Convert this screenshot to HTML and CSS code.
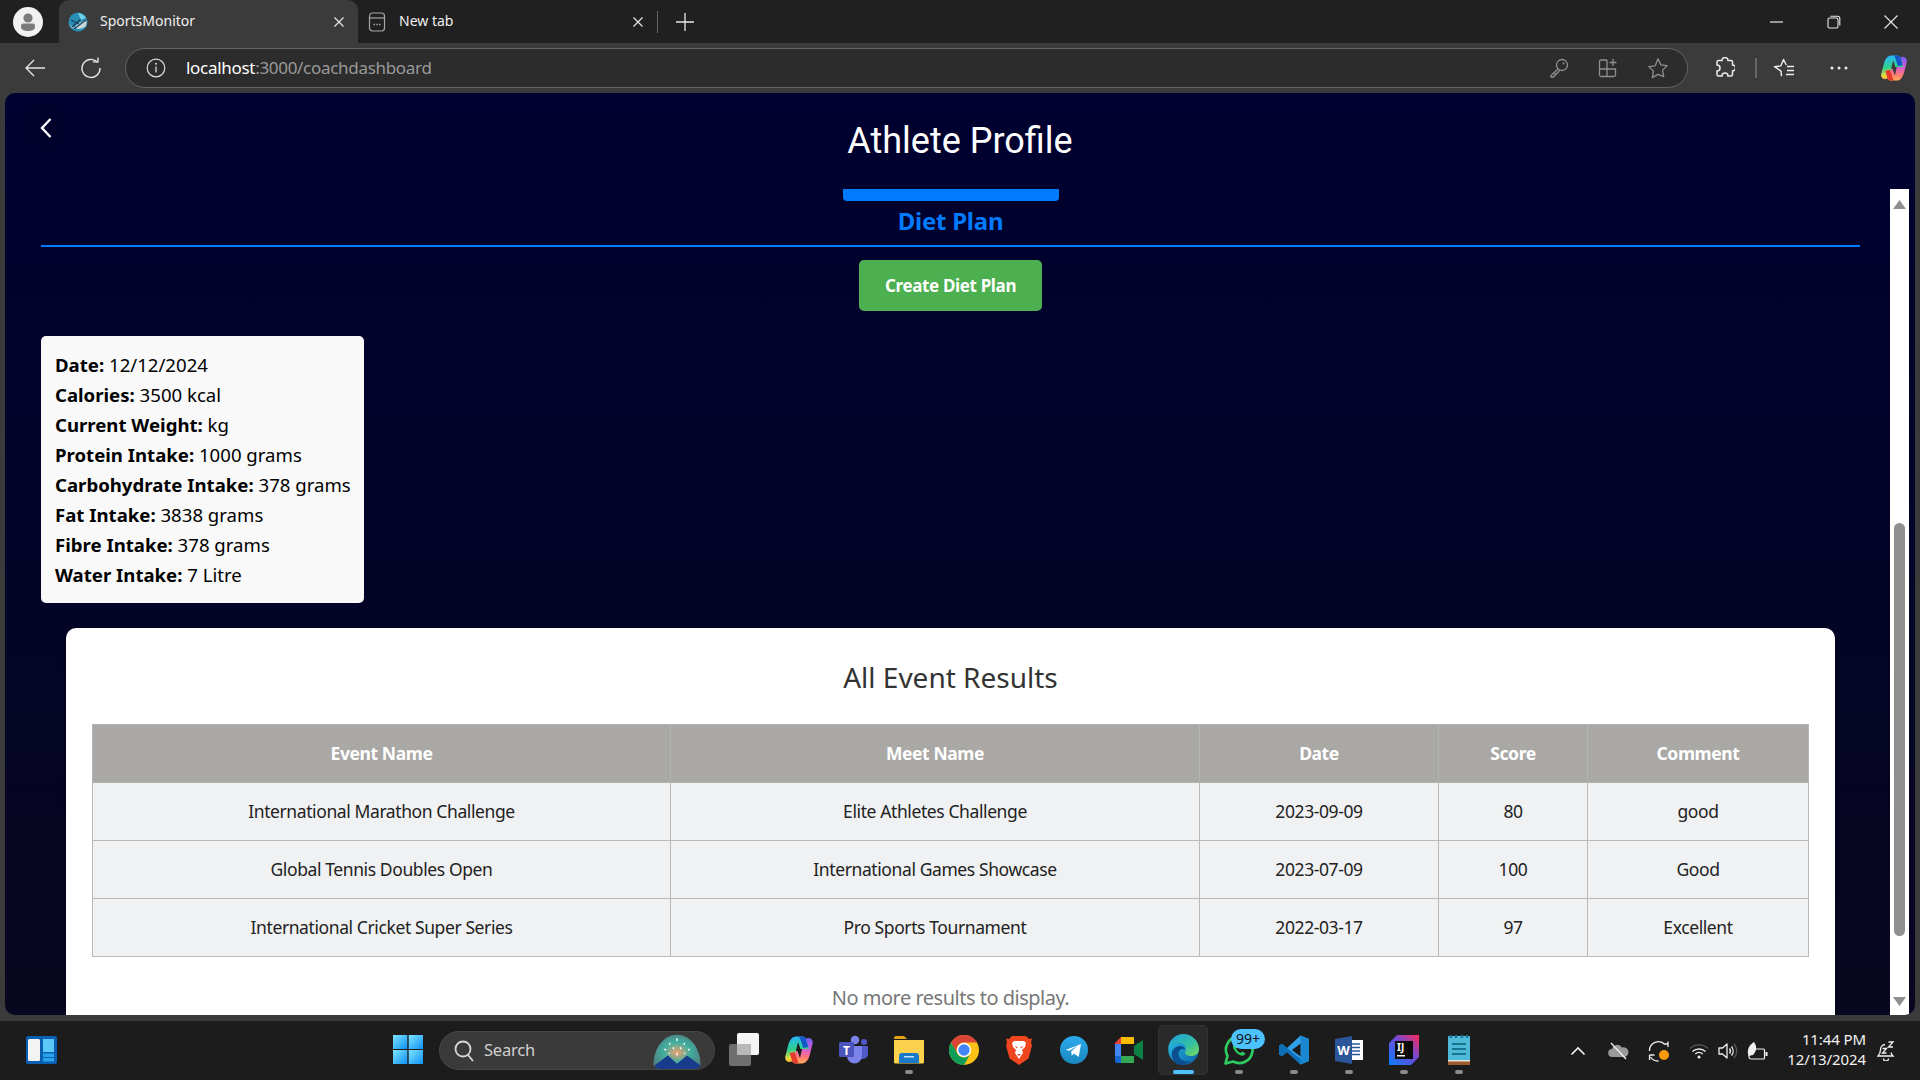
FILE: index.html
```html
<!DOCTYPE html>
<html lang="en">
<head>
<meta charset="utf-8">
<title>SportsMonitor</title>
<link rel="stylesheet" href="styles.css">
</head>
<body>
<div class="screen">
  <div class="tabstrip">
    <div class="profile">
      <svg width="30" height="30" viewBox="0 0 30 30"><circle cx="15" cy="15" r="15" fill="#f1f1f1"/><circle cx="15" cy="11" r="4.6" fill="#7b7b7b"/><path d="M8 18.5a2 2 0 0 1 2-2h10a2 2 0 0 1 2 2v1.5c0 2.6-3.2 4-7 4s-7-1.400-7-4z" fill="#7b7b7b"/></svg>
    </div>
    <div class="tab tab-active">
      <svg class="tab-ico" width="20" height="20" viewBox="0 0 20 20"><circle cx="10" cy="10" r="9.500" fill="#2a8fb5"/><path d="M1 12c4 5 11 7 17 2 .6-2 1-4 0-6-4 2-9 3-12 9-2-1-4-3-5-5z" fill="#c9d6dc"/><path d="M4 15 16 4M6 17 18 8M3 8l8 4" stroke="#1d3d55" stroke-width="1.100" fill="none"/><path d="M10 1c3 0 6 2 8 5l-5 2z" fill="#6fd0ea"/></svg>
      <span class="tab-title">SportsMonitor</span>
      <svg class="tab-x" width="12" height="12" viewBox="0 0 12 12"><path d="M1.500 1.500l9 9M10.500 1.500l-9 9" stroke="#e8e8e8" stroke-width="1.200"/></svg>
    </div>
    <div class="tab tab-idle">
      <svg class="tab-ico" width="20" height="22" viewBox="0 0 20 22"><rect x="2.500" y="2" width="15" height="18" rx="3" fill="none" stroke="#a8a8a8" stroke-width="1.200"/><path d="M2.500 7h15" stroke="#a8a8a8" stroke-width="1.200"/><path d="M6.500 13.500h1.500M9.300 13.500h1.500M12 13.500h1.500" stroke="#a8a8a8" stroke-width="1.500"/></svg>
      <span class="tab-title">New tab</span>
      <svg class="tab-x" width="12" height="12" viewBox="0 0 12 12"><path d="M1.500 1.500l9 9M10.500 1.500l-9 9" stroke="#e8e8e8" stroke-width="1.200"/></svg>
    </div>
    <div class="tab-sep"></div>
    <svg class="tab-plus" width="18" height="18" viewBox="0 0 18 18"><path d="M9 0v18M0 9h18" stroke="#e8e8e8" stroke-width="1.300"/></svg>
    <div class="win-controls">
      <svg width="14" height="14" viewBox="0 0 14 14"><path d="M0 7h13" stroke="#e8e8e8" stroke-width="1.200"/></svg>
      <svg width="14" height="14" viewBox="0 0 14 14"><rect x="1" y="3" width="10" height="10" rx="1.500" fill="none" stroke="#e8e8e8" stroke-width="1.100"/><path d="M3.500 1.200h7.300a2 2 0 0 1 2 2v7.300" fill="none" stroke="#e8e8e8" stroke-width="1.100"/></svg>
      <svg width="14" height="14" viewBox="0 0 14 14"><path d="M.5.500l13 13M13.500.500l-13 13" stroke="#e8e8e8" stroke-width="1.100"/></svg>
    </div>
  </div>

  <div class="toolbar">
    <svg class="tool-back" width="22" height="20" viewBox="0 0 22 20"><path d="M21 10H2M10 2l-8 8 8 8" fill="none" stroke="#e4e4e4" stroke-width="1.400"/></svg>
    <svg class="tool-reload" width="22" height="22" viewBox="0 0 22 22"><path d="M17.500 5.200A9 9 0 1 0 20 11" fill="none" stroke="#e4e4e4" stroke-width="1.400"/><path d="M12.800 4.900h5.200V.500" fill="none" stroke="#e4e4e4" stroke-width="1.400"/></svg>
    <div class="urlbar">
      <svg class="url-info" width="20" height="20" viewBox="0 0 20 20"><circle cx="10" cy="10" r="8.800" fill="none" stroke="#dcdcdc" stroke-width="1.200"/><path d="M10 8.500v6" stroke="#dcdcdc" stroke-width="1.300"/><circle cx="10" cy="5.800" r="1" fill="#dcdcdc"/></svg>
      <span class="url-text"><span class="url-host">localhost</span>:3000/coachdashboard</span>
      <div class="url-icons">
        <svg width="20" height="20" viewBox="0 0 20 20"><circle cx="13" cy="7" r="5.500" fill="none" stroke="#8f8f8f" stroke-width="1.300"/><circle cx="14.500" cy="5.500" r="1" fill="#8f8f8f"/><path d="M9 11 2 17.500v1.500h2.500L6 17.500V16h1.500l3-3.500" fill="none" stroke="#8f8f8f" stroke-width="1.300"/></svg>
        <svg width="20" height="20" viewBox="0 0 20 20"><path d="M9 2H3a1.500 1.500 0 0 0-1.500 1.500V17A1.500 1.500 0 0 0 3 18.500h13a1.500 1.500 0 0 0 1.500-1.500V11H1.500M9 2v16.500" fill="none" stroke="#8f8f8f" stroke-width="1.300"/><path d="M15 1v7M11.500 4.500h7" stroke="#8f8f8f" stroke-width="1.300"/></svg>
        <svg width="22" height="22" viewBox="0 0 22 22"><path d="M11 1.800l2.800 6 6.400.8-4.700 4.500 1.200 6.500L11 17.400l-5.700 3.200 1.200-6.500L1.800 9.600l6.400-.8z" fill="none" stroke="#8f8f8f" stroke-width="1.300" stroke-linejoin="round"/></svg>
      </div>
    </div>
    <svg class="tool-ext" width="20" height="22" viewBox="0 0 20 22"><path d="M7 3.500a3 3 0 0 1 6 0h3.500a1.500 1.500 0 0 1 1 1.500v3a3 3 0 0 1 0 6v3.500a1.500 1.500 0 0 1-1.500 1.500h-3a3 3 0 0 0-6 0H3.500A1.500 1.500 0 0 1 2 17.500V14a3 3 0 0 0 0-6V5a1.500 1.500 0 0 1 1.500-1.500z" fill="none" stroke="#ececec" stroke-width="1.500"/></svg>
    <div class="tool-sep"></div>
    <svg class="tool-fav" width="22" height="22" viewBox="0 0 22 22"><path d="M8.500 19.300 8 14.100 1.500 9.700l6.300-.8L10.500 2.500l2.800 5.500M14 9.500h7M14 13.500h7M13 17.500h8" fill="none" stroke="#ececec" stroke-width="1.400" stroke-linejoin="round"/></svg>
    <svg class="tool-more" width="18" height="6" viewBox="0 0 18 6"><circle cx="2" cy="3" r="1.500" fill="#ececec"/><circle cx="9" cy="3" r="1.500" fill="#ececec"/><circle cx="16" cy="3" r="1.500" fill="#ececec"/></svg>
    <svg class="tool-copilot" width="28" height="28" viewBox="0 0 30 30"><defs><linearGradient id="cpa" x1=".3" y1="0" x2=".4" y2="1"><stop offset="0" stop-color="#27b7ff"/><stop offset=".5" stop-color="#2fd08c"/><stop offset=".85" stop-color="#f5d93a"/><stop offset="1" stop-color="#f5a03a"/></linearGradient><linearGradient id="cpb" x1=".6" y1="0" x2=".5" y2="1"><stop offset="0" stop-color="#7a5cf0"/><stop offset=".45" stop-color="#d95cd0"/><stop offset=".75" stop-color="#ff7a70"/><stop offset="1" stop-color="#ffb060"/></linearGradient></defs><path d="M18 28.500h-6.500c-1.800 0-3-1.200-3.400-2.500L5 16h8.500l2.500 7 3.500-15.500c.5-2.500 2.500-4.500 5-4.500 3 0 4.700 2.500 4.200 5.500L26 19c-1.300 5.500-4 9.500-8 9.500z" fill="url(#cpb)"/><path d="M12 1.500h6.500c1.800 0 3 1.200 3.400 2.500L25 14h-8.500L14 7l-3.500 15.500c-.5 2.500-2.500 4.500-5 4.500-3 0-4.700-2.500-4.200-5.500L4 11c1.300-5.500 4-9.500 8-9.500z" fill="url(#cpa)"/><path d="M15 1.500h3.500c1.800 0 3 1.200 3.400 2.500l2.400 8-5 1-3-9z" fill="#1557c8"/><path d="M15 28.500h-3.500c-1.800 0-3-1.200-3.400-2.500l-2.400-8 5-1 3 9z" fill="#e63a2e"/></svg>
  </div>

  <main class="page">
    <button class="back" type="button" aria-label="Back">
      <svg width="14" height="22" viewBox="0 0 14 22"><path d="M11.500 2 3 11l8.500 9" fill="none" stroke="#fff" stroke-width="2.400"/></svg>
    </button>
    <h1 class="page-title">Athlete Profile</h1>
    <div class="scroll">
      <div class="content">
        <div class="tabs">
          <div class="tab-pill">
            <div class="tab-bar"></div>
            <div class="tab-name">Diet Plan</div>
          </div>
        </div>
        <div class="actions"><button class="create" type="button">Create Diet Plan</button></div>
        <div class="diet-card">
          <p><b>Date:</b> 12/12/2024</p>
          <p><b>Calories:</b> 3500 kcal</p>
          <p><b>Current Weight:</b> kg</p>
          <p><b>Protein Intake:</b> 1000 grams</p>
          <p><b>Carbohydrate Intake:</b> 378 grams</p>
          <p><b>Fat Intake:</b> 3838 grams</p>
          <p><b>Fibre Intake:</b> 378 grams</p>
          <p><b>Water Intake:</b> 7 Litre</p>
        </div>
        <section class="results">
          <h2>All Event Results</h2>
          <table>
            <colgroup><col class="c1"><col class="c2"><col class="c3"><col class="c4"><col class="c5"></colgroup>
            <thead><tr><th>Event Name</th><th>Meet Name</th><th>Date</th><th>Score</th><th>Comment</th></tr></thead>
            <tbody>
              <tr><td>International Marathon Challenge</td><td>Elite Athletes Challenge</td><td>2023-09-09</td><td>80</td><td>good</td></tr>
              <tr><td>Global Tennis Doubles Open</td><td>International Games Showcase</td><td>2023-07-09</td><td>100</td><td>Good</td></tr>
              <tr><td>International Cricket Super Series</td><td>Pro Sports Tournament</td><td>2022-03-17</td><td>97</td><td>Excellent</td></tr>
            </tbody>
          </table>
          <p class="no-more">No more results to display.</p>
        </section>
      </div>
      <div class="scrollbar">
        <svg class="sb-arrow" width="13" height="9" viewBox="0 0 13 9"><path d="M6.500 0 13 9H0z" fill="#8f8f8f"/></svg>
        <div class="sb-track"><div class="sb-thumb"></div></div>
        <svg class="sb-arrow" width="13" height="9" viewBox="0 0 13 9"><path d="M6.500 9 13 0H0z" fill="#8f8f8f"/></svg>
      </div>
    </div>
  </main>

  <footer class="taskbar">
    <svg class="widgets" width="31" height="28" viewBox="0 0 31 28"><rect width="31" height="28" rx="2" fill="#0b5fb0"/><rect x="2" y="3" width="12" height="22" rx="1.500" fill="#f3f3f3"/><rect x="17" y="3" width="11" height="13" fill="#5cc8f5"/><rect x="17" y="17.500" width="11" height="3.500" fill="#2aa5ec"/><rect x="17" y="22" width="11" height="3.500" fill="#2aa5ec"/></svg>
    <svg class="start" width="30" height="29" viewBox="0 0 30 29"><defs><linearGradient id="ws" x1="0" y1="0" x2="1" y2="1"><stop offset="0" stop-color="#7de6ff"/><stop offset="1" stop-color="#0f90f5"/></linearGradient></defs><rect width="14.300" height="14" fill="url(#ws)"/><rect x="15.700" width="14.300" height="14" fill="url(#ws)"/><rect y="15" width="14.300" height="14" fill="url(#ws)"/><rect x="15.700" y="15" width="14.300" height="14" fill="url(#ws)"/></svg>
    <div class="search">
      <svg width="22" height="24" viewBox="0 0 22 24"><circle cx="10" cy="10" r="7.500" fill="none" stroke="#d8d8d8" stroke-width="1.800"/><path d="M15 16l5 6" stroke="#d8d8d8" stroke-width="1.800"/></svg>
      <span class="search-label">Search</span>
      <svg class="search-art" width="56" height="40" viewBox="0 0 56 44"><defs><radialGradient id="sa" cx=".5" cy=".5" r=".7"><stop offset="0" stop-color="#f0a070"/><stop offset=".4" stop-color="#3fb0a0"/><stop offset="1" stop-color="#5a6470"/></radialGradient></defs><path d="M2 38C2 18 14 4 28 4s26 14 26 34l-6 5H8z" fill="url(#sa)"/><path d="M3 38 18 27l10 9 11-9 15 11-6 5H8z" fill="#173c8c"/><path d="M28 8v3M20 13v2M36 13v2M14 20l2 1M42 20l-2 1M24 18v2M32 18v2M28 24v3M19 24l1 1M37 24l-1 1" stroke="#fff" stroke-width="1.500"/></svg>
    </div>
    <svg class="taskview" width="30" height="33" viewBox="0 0 30 33"><rect x="0" y="11" width="22" height="22" rx="2" fill="#6e6e6e"/><rect x="8" y="0" width="22" height="22" rx="2" fill="#f4f4f4"/><rect x="8" y="11" width="14" height="11" fill="#b8b8b8"/></svg>
    <div class="apps">
      <div class="app"><svg width="30" height="30" viewBox="0 0 30 30"><path d="M18 28.500h-6.500c-1.800 0-3-1.200-3.400-2.500L5 16h8.500l2.500 7 3.500-15.500c.5-2.500 2.500-4.500 5-4.500 3 0 4.700 2.500 4.200 5.500L26 19c-1.300 5.500-4 9.500-8 9.500z" fill="url(#cpb)"/><path d="M12 1.500h6.500c1.800 0 3 1.200 3.400 2.500L25 14h-8.500L14 7l-3.500 15.500c-.5 2.500-2.500 4.500-5 4.500-3 0-4.700-2.500-4.200-5.500L4 11c1.300-5.500 4-9.500 8-9.500z" fill="url(#cpa)"/><path d="M15 1.500h3.500c1.800 0 3 1.200 3.400 2.500l2.400 8-5 1-3-9z" fill="#1557c8"/><path d="M15 28.500h-3.500c-1.800 0-3-1.200-3.400-2.500l-2.400-8 5-1 3 9z" fill="#e63a2e"/></svg></div>
      <div class="app"><svg width="30" height="30" viewBox="0 0 30 30"><circle cx="16" cy="5" r="4.300" fill="#7b83eb"/><circle cx="25" cy="7" r="3" fill="#5059c9"/><path d="M21 11h8v8a5 5 0 0 1-5 5h-3z" fill="#5059c9"/><path d="M8 11h15v10a7.500 7.500 0 0 1-15 0z" fill="#7b83eb"/><rect y="7" width="15" height="15" rx="1.500" fill="#4b53bc"/><text class="t-teams" x="7.500" y="19.500" text-anchor="middle">T</text></svg></div>
      <div class="app"><svg width="30" height="28" viewBox="0 0 30 28"><path d="M0 2a2 2 0 0 1 2-2h8l3 3h-13z" fill="#e4a218"/><path d="M0 4h30v22a1.500 1.500 0 0 1-1.500 1.500h-27A1.500 1.500 0 0 1 0 26z" fill="#fcd24c"/><path d="M5 27v-7a3 3 0 0 1 3-3h14a3 3 0 0 1 3 3v7z" fill="#1878c9"/><rect x="10" y="20" width="10" height="1.500" fill="#bfe6ff"/></svg><span class="run"></span></div>
      <div class="app"><svg width="30" height="30" viewBox="0 0 30 30"><circle cx="15" cy="15" r="15" fill="#fbc116"/><path d="M2 7.500A15 15 0 0 1 28 7.500H15a7.500 7.500 0 0 0-6.500 11.250z" fill="#db4437"/><path d="M2 7.500l6.500 11.250A7.500 7.500 0 0 0 21.500 18.750L15 30A15 15 0 0 1 2 7.500z" fill="#0f9d58"/><circle cx="15" cy="15" r="7.200" fill="#fff"/><circle cx="15" cy="15" r="5.700" fill="#4285f4"/></svg></div>
      <div class="app"><svg width="26" height="30" viewBox="0 0 26 30"><path d="M6 1h14l3 3 3-.5-1 4 1 3-3.500 13L13 30 3.500 23.500 0 10.500l1-3-1-4 3 .5z" fill="#f0461f"/><path d="M8 6h10l2 2-1 4-3 3 1 3-4 6-4-6 1-3-3-3-1-4z" fill="#fff"/><path d="M8.500 11l3 1-.5 1.500zM17.500 11l-3 1 .5 1.500zM11 19h4l-2 2z" fill="#f0461f"/></svg></div>
      <div class="app"><svg width="28" height="28" viewBox="0 0 28 28"><defs><linearGradient id="tg" x1="0" y1="0" x2="0" y2="1"><stop offset="0" stop-color="#2aabee"/><stop offset="1" stop-color="#1a87bd"/></linearGradient></defs><circle cx="14" cy="14" r="14" fill="url(#tg)"/><path d="M5.500 14 21 8l-2.300 13-4.700-3.500-2.300 2.300-.5-4.300 6.500-6-8.300 5.200z" fill="#fff"/></svg></div>
      <div class="app"><svg width="28" height="26" viewBox="0 0 28 26"><path d="M6 0h13v7H6z" fill="#fbbc04"/><path d="M0 6 6 0v7H0z" fill="#ea4335"/><path d="M0 7h6v12H0z" fill="#4285f4"/><path d="M0 19h6v7H2a2 2 0 0 1-2-2z" fill="#1967d2"/><path d="M6 19h13v7H6z" fill="#34a853"/><path d="M19 9l9-6v20l-9-6z" fill="#0d8043"/><path d="M19 7V2a2 2 0 0 0-2-2h-1v7z" fill="#fbbc04"/></svg></div>
      <div class="app app-active"><svg width="31" height="31" viewBox="0 0 31 31"><defs><linearGradient id="eb" x1="0" y1="0" x2="1" y2="1"><stop offset="0" stop-color="#2bc4e8"/><stop offset="1" stop-color="#0a5fa8"/></linearGradient><linearGradient id="eg" x1="0" y1="0" x2="1" y2="1"><stop offset="0" stop-color="#1b9de2"/><stop offset=".6" stop-color="#35c1a0"/><stop offset="1" stop-color="#7ed957"/></linearGradient></defs><circle cx="15.500" cy="15.500" r="15.300" fill="url(#eb)"/><path d="M.5 13C2 5 8 .2 15.500.2 24 .2 31 7 31 15c0 4.500-3.500 7-8 7-3 0-6-1.300-6-3.500 0-1 1-1.300 1-3.300C18 12 15.500 9 11 9 6 9 2 10.500.5 13z" fill="url(#eg)"/><path d="M12 31c-6-1-9-7-8-13 1.500-4 5-6 8-6 3.500 0 5 2 5 3.500-3-1.500-7 1-6.500 5 .5 5 6 8 12 6.500-3 3-6.500 4.500-10.500 4z" fill="#0b4f8f"/></svg><span class="run run-active"></span></div>
      <div class="app"><svg class="wa" width="30" height="30" viewBox="0 0 30 30"><path d="M1.500 28.500 3.500 21A13.300 13.300 0 1 1 9 26.500z" fill="none" stroke="#2ecc5e" stroke-width="2.700" stroke-linejoin="round"/><path d="M10 8.500c-1.500 1.500-1.500 3.500 0 6 1.500 3 4 5 7 6 2 .5 4-.5 4.500-2l-3.500-2-1.500 1.500c-2-.8-3.500-2.500-4.500-4.500l1.500-1.500-1.800-3.500z" fill="#2ecc5e"/></svg><span class="badge">99+</span><span class="run"></span></div>
      <div class="app"><svg width="30" height="30" viewBox="0 0 30 30"><path d="M21.500.5 30 4v22l-8.500 3.500L8 17l-5 4-3-1.500v-9L3 9l5 4z" fill="#2f9fe8"/><path d="M21.500.5V29.500L30 26V4z" fill="#1a87d0"/><path d="M21.500 8.500 13 15l8.500 6.500z" fill="#1a1a1a"/><path d="M0 10.500 3 9l18.500 15v5.500L8 17l-5 4-3-1.500z" fill="#0d6fb8"/></svg><span class="run"></span></div>
      <div class="app"><svg width="28" height="28" viewBox="0 0 28 28"><rect x="12" y="4" width="16" height="20" fill="#fff"/><path d="M15 8h10M15 11.500h10M15 15h10M15 18.500h10" stroke="#2b5797" stroke-width="1.500"/><path d="M0 3 17 0v28L0 25z" fill="#2b579a"/><text class="t-word" x="8.500" y="19" text-anchor="middle">W</text></svg><span class="run"></span></div>
      <div class="app"><svg width="30" height="30" viewBox="0 0 30 30"><defs><linearGradient id="ij" x1="0" y1="1" x2="1" y2="0"><stop offset="0" stop-color="#087cfa"/><stop offset=".55" stop-color="#6d4bd8"/><stop offset="1" stop-color="#fe2857"/></linearGradient></defs><path d="M8 0h22v22l-8 8H0V8z" fill="url(#ij)"/><rect x="6" y="6" width="18" height="18" fill="#0b0b0b"/><text class="t-ij" x="8" y="15.500">IJ</text><rect x="8" y="20" width="8" height="1.500" fill="#fff"/></svg><span class="run"></span></div>
      <div class="app"><svg width="22" height="30" viewBox="0 0 22 30"><rect y="1" width="22" height="28" rx="1" fill="#4fb9d9"/><rect y="26" width="22" height="4" fill="#9c5a2a"/><rect y="25" width="22" height="1.500" fill="#e6e6e6"/><path d="M3 3V0M8 3V0M14 3V0M19 3V0" stroke="#1b6f8f" stroke-width="2.200"/><path d="M4 9h14M4 14h14M4 19h14" stroke="#17748f" stroke-width="2"/></svg><span class="run"></span></div>
    </div>
    <div class="tray">
      <svg class="tray-chev" width="16" height="10" viewBox="0 0 16 10"><path d="M1.500 8.500 8 2l6.500 6.500" fill="none" stroke="#f0f0f0" stroke-width="1.700"/></svg>
      <svg class="tray-cloud" width="21" height="18" viewBox="0 0 21 18"><path d="M4.500 15A4 4 0 0 1 4 7a5.500 5.500 0 0 1 10-1.500A4.700 4.700 0 0 1 17 15z" fill="#9a9a9a"/><path d="M3 1l15 16" stroke="#f4f4f4" stroke-width="1.300"/></svg>
      <svg class="tray-sync" width="22" height="22" viewBox="0 0 22 22"><path d="M1.500 11A9 9 0 0 1 17 4.500M20 7V1.500M20.500 4h-5" fill="none" stroke="#f0f0f0" stroke-width="1.300"/><path d="M1.500 15h5M1.500 15v5M2.500 17a9 9 0 0 0 8 4" fill="none" stroke="#f0f0f0" stroke-width="1.300"/><circle cx="16" cy="15" r="5" fill="#f59a0a"/></svg>
      <svg class="tray-wifi" width="20" height="16" viewBox="0 0 20 16"><path d="M1 5.500a13 13 0 0 1 18 0" fill="none" stroke="#5a5a5a" stroke-width="1.300"/><path d="M3.500 8.500a9.500 9.500 0 0 1 13 0M6.300 11a5.500 5.500 0 0 1 7.400 0" fill="none" stroke="#f0f0f0" stroke-width="1.400"/><circle cx="10" cy="14" r="1.500" fill="#f0f0f0"/></svg>
      <svg class="tray-vol" width="20" height="18" viewBox="0 0 20 18"><path d="M1 6h3.500L9 2v14l-4.500-4H1z" fill="none" stroke="#f0f0f0" stroke-width="1.300" stroke-linejoin="round"/><path d="M11.500 6.500a4 4 0 0 1 0 5M13.500 4.500a7 7 0 0 1 0 9" fill="none" stroke="#f0f0f0" stroke-width="1.300"/><path d="M16 2a10.500 10.500 0 0 1 0 14" fill="none" stroke="#5a5a5a" stroke-width="1.300"/></svg>
      <svg class="tray-bat" width="21" height="18" viewBox="0 0 21 18"><path d="M3 7h13.500a1 1 0 0 1 1 1v8a1 1 0 0 1-1 1H4a2 2 0 0 1-2-2z" fill="none" stroke="#f0f0f0" stroke-width="1.200"/><rect x="18.500" y="10" width="2" height="4" fill="#f0f0f0"/><path d="M1.500 14C-.5 8 2 3 7 0c3 4 3 9-1 13z" fill="#f0f0f0"/></svg>
      <div class="clock"><span>11:44 PM</span><span>12/13/2024</span></div>
      <svg class="tray-bell" width="18" height="20" viewBox="0 0 18 20"><path d="M8 3.500A5 5 0 0 0 3.500 8.500c0 4-1 5-2.500 6.500h15c-1-1-1.700-2-2-3.500M6.500 17.500a2.500 2.500 0 0 0 5 0" fill="none" stroke="#f0f0f0" stroke-width="1.300"/><path d="M11.500 1H16l-4.500 5H16M5.500 7.500h4l-4 4.500h4" fill="none" stroke="#f0f0f0" stroke-width="1.300"/></svg>
    </div>
  </footer>
</div>
</body>
</html>
```

FILE: styles.css
```css
* { box-sizing: border-box; }
html, body { margin: 0; height: 100%; overflow: hidden; }
body { font-family: "Noto Sans", "Open Sans", sans-serif; background: #3b3b3b; }
.screen { width: 1920px; height: 1080px; display: flex; flex-direction: column; }

/* Tab strip */
.tabstrip { height: 43px; flex: none; background: #202020; display: flex; align-items: center; color: #f0f0f0; font-size: 14px; }
.profile { width: 59px; flex: none; padding-left: 13px; display: flex; }
.tab { height: 43px; width: 299px; flex: none; display: flex; align-items: center; }
.tab-active { background: #3b3b3b; border-radius: 10px 10px 0 0; padding-left: 9px; }
.tab-idle { padding-left: 9px; width: 299px; }
.tab-ico { flex: none; }
.tab-title { margin-left: 12px; flex: 1; padding-bottom: 2px; }
.tab-x { margin-right: 13px; }
.tab-sep { width: 1px; height: 22px; background: #666; }
.tab-plus { margin-left: 18px; }
.win-controls { margin-left: auto; display: flex; gap: 43px; padding-right: 22px; align-items: center; }

/* Toolbar */
.toolbar { height: 50px; flex: none; background: #3b3b3b; display: flex; align-items: center; padding-left: 24px; }
.tool-back { flex: none; }
.tool-reload { flex: none; margin-left: 34px; }
.urlbar { margin-left: 23px; width: 1563px; height: 40px; flex: none; border: 1.500px solid #636363; border-radius: 20px; background: #2c2c2c; display: flex; align-items: center; padding-left: 20px; }
.url-info { flex: none; }
.url-text { margin-left: 20px; font-size: 17px; color: #9a9a9a; letter-spacing: -.3px; padding-bottom: 2px; }
.url-host { color: #fff; }
.url-icons { margin-left: auto; display: flex; align-items: center; gap: 29px; padding-right: 18px; }
.tool-ext { margin-left: 27px; flex: none; }
.tool-sep { width: 2px; height: 20px; background: #666; margin-left: 20px; flex: none; }
.tool-fav { margin-left: 16px; flex: none; }
.tool-more { margin-left: 35px; flex: none; }
.tool-copilot { margin-left: 32px; flex: none; }

/* Page */
.page { position: relative; flex: 1; min-height: 0; margin: 0 5px; background: linear-gradient(#000030, #07071f); border-radius: 10px; overflow: hidden; display: flex; flex-direction: column; }
.back { position: absolute; left: 17px; top: 10px; width: 48px; height: 48px; border: 0; border-radius: 50%; background: #00002a; display: flex; align-items: flex-start; justify-content: center; padding-top: 14px; }
.page-title { margin: 0; height: 96px; flex: none; text-align: center; color: #fff; font: 400 36px/96px Roboto, sans-serif; }
.scroll { flex: 1; min-height: 0; display: flex; margin-right: 6px; overflow: hidden; }
.content { flex: 1; min-width: 0; padding: 0 30px 0 36px; }

.tabs { border-bottom: 2px solid #007bff; height: 58px; display: flex; justify-content: center; }
.tab-pill { width: 216px; text-align: center; }
.tab-bar { height: 12px; background: #007bff; border-radius: 0 0 4px 4px; }
.tab-name { color: #007bff; font-weight: 700; font-size: 24px; line-height: 40px; letter-spacing: -.25px; }
.actions { display: flex; justify-content: center; padding-top: 13px; }
.create { width: 183px; height: 51px; border: 0; border-radius: 5px; background: #4caf50; color: #fff; font: 700 17px "Noto Sans", sans-serif; letter-spacing: -.35px; }
.diet-card { width: 323px; height: 267px; margin-top: 25px; padding: 14px; background: #f9f9f9; border-radius: 5px; color: #000; font-size: 18.600px; white-space: nowrap; }
.diet-card p { margin: 0; line-height: 30px; }
.results { margin: 25px 25px 0; height: 460px; padding: 26px; background: #fff; border-radius: 10px; box-shadow: 0 0 3px rgba(0,0,0,.3); }
.results h2 { margin: 0; height: 70px; text-align: center; font-weight: 400; font-size: 28px; line-height: 46px; color: #333; }
table { width: 1716px; border-collapse: collapse; table-layout: fixed; font-size: 17.500px; letter-spacing: -.4px; color: #222; }
.c1 { width: 578px; } .c2 { width: 529px; } .c3 { width: 239px; } .c4 { width: 149px; } .c5 { width: 221px; }
th, td { border: 1px solid #b9b9b9; text-align: center; height: 58px; padding: 0 0 2px; font-weight: 400; }
th { background: #a9a8a5; color: #fff; font-weight: 700; height: 58px; border-color: #b4b4b2; }
td { background: #f0f1f3; }
.no-more { margin: 27px 0 0; text-align: center; font-size: 20px; color: #777; letter-spacing: -.5px; }

/* Scrollbar */
.scrollbar { width: 19px; flex: none; background: #fff; display: flex; flex-direction: column; align-items: center; padding: 11px 0 9px; }
.sb-track { flex: 1; width: 11px; padding-top: 314px; }
.sb-thumb { height: 413px; background: #8f8f8f; border-radius: 6px; }

/* Taskbar */
.taskbar { height: 59px; margin-top: 6px; flex: none; background: #1c1c1c; display: flex; align-items: center; position: relative; color: #f2f2f2; }
.widgets { margin: 0 0 2px 26px; flex: none; }
.start { margin: 0 0 2px 336px; flex: none; }
.search { margin-left: 16px; width: 276px; height: 39px; flex: none; border-radius: 20px; background: #3a3a3a; border: 1px solid #474747; display: flex; align-items: center; padding-left: 13px; overflow: hidden; }
.search-label { margin-left: 9px; font-size: 16.500px; color: #d0d0d0; letter-spacing: -.2px; flex: 1; padding-bottom: 2px; }
.search-art { flex: none; margin-right: 9px; }
.taskview { margin-left: 14px; flex: none; margin-bottom: 2px; }
.apps { display: flex; margin-left: 12px; }
.app { position: relative; width: 55px; height: 59px; display: flex; align-items: center; justify-content: center; }
.app-active::before { content: ""; position: absolute; left: 2px; right: 3px; top: 4px; bottom: 5px; background: #2a2a2a; border: 1px solid #333; border-radius: 5px; }
.app svg { position: relative; margin-bottom: 2px; }
.run { position: absolute; left: 24px; bottom: 6px; width: 8px; height: 4px; border-radius: 2px; background: #8a8a8a; }
.run-active { left: 17px; width: 21px; background: #4cc2ff; }
.badge { position: absolute; left: 20px; top: 8px; width: 34px; height: 20px; border-radius: 10px; background: #4cc2ff; color: #111; font-size: 14px; line-height: 20px; text-align: center; }
.t-teams { font: 700 12px "Noto Sans", sans-serif; fill: #fff; }
.t-word { font: 700 13px "Noto Sans", sans-serif; fill: #fff; }
.t-ij { font: 700 10px "Noto Sans", sans-serif; fill: #fff; }

.tray { position: absolute; right: 0; top: 0; height: 59px; width: 350px; display: flex; align-items: center; }
.tray-chev { flex: none; }
.tray-cloud { margin-left: 22px; flex: none; }
.tray-sync { margin-left: 19px; flex: none; }
.tray-wifi { margin-left: 19px; flex: none; }
.tray-vol { margin-left: 9px; flex: none; }
.tray-bat { margin-left: 9px; flex: none; }
.clock { margin-left: 10px; width: 88px; display: flex; flex-direction: column; align-items: flex-end; font-size: 15px; line-height: 20px; letter-spacing: -.1px; flex: none; padding-bottom: 4px; }
.tray-bell { margin-left: 11px; flex: none; }
```
